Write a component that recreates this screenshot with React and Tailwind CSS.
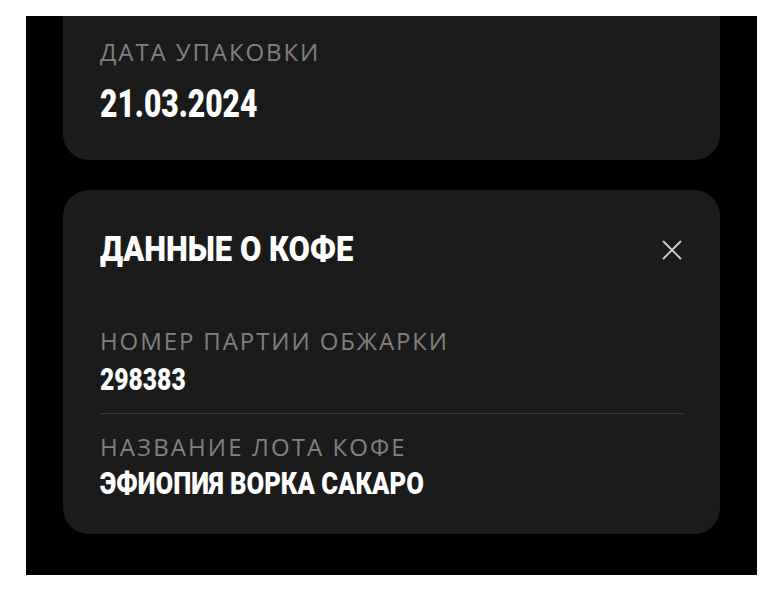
import React from "react";

const labelFont = { fontFamily: '"Open Sans", "Noto Sans", sans-serif' };
const valueFont = { fontFamily: 'Roboto, "Liberation Sans", sans-serif' };

function Label({ children, className = "" }) {
  return (
    <div
      className={`text-[24px] leading-[23px] text-[#808080] tracking-[1.9px] whitespace-nowrap ${className}`}
      style={labelFont}
    >
      {children}
    </div>
  );
}

function Value({ children, size = "text-[32px] leading-[32px]", squeeze = "scale-x-[0.8]", className = "" }) {
  return (
    <div className={`${className}`}>
      <span
        className={`inline-block origin-left font-black text-white whitespace-nowrap ${size} ${squeeze}`}
        style={valueFont}
      >
        {children}
      </span>
    </div>
  );
}

export default function App() {
  return (
    <div className="min-h-screen bg-white pt-4 pl-[26px]">
      <div className="w-[731px] h-[559px] bg-black px-[37px] overflow-hidden">
        {/* Packing date card (scrolled, top edge out of view) */}
        <div className="bg-[#1b1b1b] rounded-b-[26px] px-[37px] pt-6 pb-[37px]">
          <Label>ДАТА УПАКОВКИ</Label>
          <Value
            className="mt-[22px]"
            size="text-[38px] leading-[38px]"
            squeeze="scale-x-[0.79]"
          >
            21.03.2024
          </Value>
        </div>

        {/* Coffee data card */}
        <div className="mt-[30px] bg-[#1b1b1b] rounded-[26px] px-[37px] pt-[42px] pb-[34px]">
          <div className="flex items-center justify-between">
            <Value size="text-[35px] leading-[35px]" squeeze="scale-x-[0.885]">
              ДАННЫЕ О КОФЕ
            </Value>
            <button className="w-5 h-5 flex items-center justify-center mr-[1px]">
              <svg width="20" height="20" viewBox="0 0 20 20" fill="none">
                <path
                  d="M1.5 1.5 18.5 18.5M18.5 1.5 1.5 18.5"
                  stroke="#cfcfcf"
                  strokeWidth="1.8"
                  strokeLinecap="round"
                />
              </svg>
            </button>
          </div>

          <Label className="mt-[62px]">НОМЕР ПАРТИИ ОБЖАРКИ</Label>
          <Value className="mt-[11px]" squeeze="scale-x-[0.77]">
            298383
          </Value>

          <div className="mt-[17px] h-px bg-[#3a3a3a]" />

          <Label className="mt-[21px] tracking-[2.1px]">НАЗВАНИЕ ЛОТА КОФЕ</Label>
          <Value className="mt-[9px]" squeeze="scale-x-[0.8]">
            ЭФИОПИЯ ВОРКА САКАРО
          </Value>
        </div>
      </div>
    </div>
  );
}
